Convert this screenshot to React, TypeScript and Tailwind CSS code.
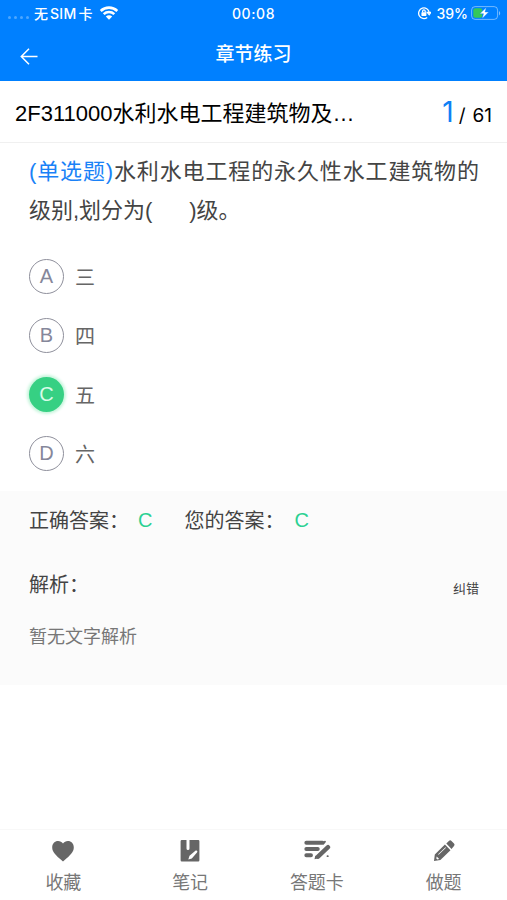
import React, { useState } from "react";
import clsx from "clsx";

interface Option {
  key: string;
  label: string;
}

const options: Option[] = [
  { key: "A", label: "三" },
  { key: "B", label: "四" },
  { key: "C", label: "五" },
  { key: "D", label: "六" },
];

const correctAnswer = "C";

const HeartIcon = () => (
  <svg width="24" height="24" viewBox="0 0 24 24" fill="currentColor">
    <path d="M12 22.6 10.6 21.2C5 16.3 1.2 13 1.2 8.4 1.2 4.7 3.8 2 7.1 2c2 0 3.8.9 4.9 2.5C13.100 2.900 14.900 2 16.900 2c3.300 0 5.900 2.700 5.900 6.400 0 4.600-3.800 7.900-9.400 12.800z" />
  </svg>
);

const NoteIcon = () => (
  <svg width="24" height="24" viewBox="0 0 24 24" fill="currentColor">
    <path
      fillRule="evenodd"
      d="M3.800 1H8.500V9.500a1.500 1.500 0 0 0 3 0V1H20.200a1.200 1.200 0 0 1 1.200 1.200V21.300a1.200 1.200 0 0 1-1.200 1.200H3.800a1.200 1.200 0 0 1-1.200-1.200V2.200A1.200 1.200 0 0 1 3.800 1zM10.300 20.400l3.500-1 5-5.600c1.400-1.700-.1-3.200-1.700-1.900l-5.600 4.900z"
    />
  </svg>
);

const SheetIcon = () => (
  <svg
    width="28"
    height="24"
    viewBox="0 0 28 24"
    fill="none"
    stroke="currentColor"
    strokeLinecap="round"
  >
    <path strokeWidth="3.900" d="M3.300 3.700H19.500M3.300 10H14.800M3.300 16.300H8" />
    <path strokeWidth="4.400" d="M15 17.700 25 8.200" />
    <path strokeWidth="1.800" d="M20.500 4.500 22 2.700M24.500 17.200h.3" />
    <path fill="currentColor" stroke="none" d="m12.300 16.500-.8 3.800 4.400-1z" />
  </svg>
);

const PencilIcon = () => (
  <svg width="24" height="24" viewBox="0 0 24 24" fill="currentColor">
    <path
      fillRule="evenodd"
      d="M12.900 5.500 18.500 11.300 8.400 21 2 22 2.800 15.400zM4.700 17.500l-.4 2.100 1 .8 1.900-.4zM13.500 8.300 6.100 15.300l.5.500 7.400-7z"
    />
    <path d="m14.300 4.400 2.600-2.500a1.800 1.800 0 0 1 2.600 0l2.500 2.700a1.800 1.800 0 0 1 0 2.500L19.500 9.900z" />
  </svg>
);

const tabs = [
  { label: "收藏", Icon: HeartIcon },
  { label: "笔记", Icon: NoteIcon },
  { label: "答题卡", Icon: SheetIcon },
  { label: "做题", Icon: PencilIcon },
];

const StatusBar = () => (
  <div className="grid h-[26px] grid-cols-3 items-center font-['Inter','Noto_Sans_CJK_SC',sans-serif] text-[14px] font-medium">
    <div className="flex items-center pl-2">
      <div className="mt-2 flex gap-[3px]">
        {[0, 1, 2, 3].map((dot) => (
          <span key={dot} className="size-[3px] rounded-full bg-white/30" />
        ))}
      </div>
      <div className="ml-[5px] flex gap-[2px] whitespace-nowrap">
        <span>无</span>
        <span className="tracking-[0.3px]">SIM</span>
        <span>卡</span>
      </div>
      <svg
        className="ml-[6px]"
        width="20"
        height="14"
        viewBox="0 0 20 14"
        fill="none"
        stroke="currentColor"
        strokeWidth="2.6"
      >
        <path d="M1.700 5C6.400.5 13.600.5 18.300 5M4.700 8.100c3-2.800 7.600-2.800 10.600 0" />
        <path
          fill="currentColor"
          stroke="none"
          d="M10 13.700 6.800 10.500c1.800-1.700 4.600-1.700 6.400 0z"
        />
      </svg>
    </div>
    <span className="text-center tracking-[0.6px]">00:08</span>
    <div className="flex items-center justify-end pr-[6px]">
      <svg
        width="14"
        height="14"
        viewBox="0 0 14 14"
        fill="none"
        stroke="currentColor"
        strokeWidth="1.300"
      >
        <path d="M10.200 11.400A5.300 5.300 0 1 1 12.200 6.500M10.300 6.300h3.600L12.200 8.700z" />
        <path d="M5.600 6.500V5.200a1.300 1.300 0 0 1 2.600 0v1.300" />
        <rect
          x="4.400"
          y="6.200"
          width="5"
          height="3.700"
          rx=".6"
          fill="currentColor"
          stroke="none"
        />
      </svg>
      <span className="ml-[6px]">39%</span>
      <svg
        className="ml-[3px]"
        width="30"
        height="14"
        viewBox="0 0 30 14"
        fill="none"
      >
        <rect
          x=".6"
          y=".6"
          width="26"
          height="12.800"
          rx="3.500"
          stroke="#fff"
          strokeOpacity=".45"
        />
        <path d="M28 5v4.500c1.600-.7 1.600-3.800 0-4.500z" fill="#fff" fillOpacity=".5" />
        <rect x="2.300" y="2.300" width="9" height="9.400" rx="2" fill="#34c759" />
        <path
          d="M15.300 1.500 8.800 7.700h3.700l-1.300 4.800 6.500-6.500H14z"
          fill="#fff"
          stroke="#0580ff"
          strokeWidth=".4"
        />
      </svg>
    </div>
  </div>
);

export default function App() {
  const [selected, setSelected] = useState("C");

  return (
    <div
      lang="zh-CN"
      className="flex h-[900px] w-[507px] flex-col overflow-hidden bg-white font-['Liberation_Sans','Noto_Sans_CJK_SC',sans-serif] text-[#444]"
    >
      <header className="h-[81px] shrink-0 bg-[#0080ff] text-white">
        <StatusBar />
        <div className="grid h-[55px] grid-cols-3 items-center">
          <button className="pl-5 pt-[5px]" aria-label="返回">
            <svg
              width="18"
              height="17"
              viewBox="0 0 18 17"
              fill="none"
              stroke="currentColor"
              strokeWidth="1.500"
            >
              <path d="M17.500 8.500H1.500M9 .8 1.300 8.500 9 16.200" />
            </svg>
          </button>
          <h1 className="pt-1 text-center text-[19px] font-medium">
            章节练习
          </h1>
        </div>
      </header>

      <div className="flex h-[62px] shrink-0 items-center justify-between border-b border-[#f0f0f0] pl-[15px] pr-[15px] pt-1 text-black">
        <h2 className="whitespace-nowrap text-[22px]">
          2F311000水利水电工程建筑物及…
        </h2>
        <div className="flex items-baseline font-['Inter',sans-serif] text-[19px] leading-[40px]">
          <span className="mr-[5px] text-[28px] text-[#0f80f5]">1</span>
          <span className="mr-[7px]">/</span>
          <span>61</span>
        </div>
      </div>

      <p className="mt-[9px] pl-[29px] pr-[28px] text-justify text-[22px] leading-[39px]">
        <span className="text-[#1a82f7]">(单选题)</span>
        水利水电工程的永久性水工建筑物的级别,划分为(
        {"\u00a0".repeat(6)})级。
      </p>

      <ul className="mt-[17px] pl-[29px]">
        {options.map(({ key, label }) => (
          <li key={key} className="flex h-[59px] items-center">
            <button
              onClick={() => setSelected(key)}
              className={clsx(
                "flex size-[35px] items-center justify-center rounded-full pb-[2px] text-[20px]",
                selected === key
                  ? "bg-[#36d083] text-[#d9fbe8] shadow-[0_0_3px_2px_#c5f5db]"
                  : "border border-[#8f909c] text-[#85879a]"
              )}
            >
              {key}
            </button>
            <span className="ml-[11px] pt-[2px] text-[20px] text-[#666]">
              {label}
            </span>
          </li>
        ))}
      </ul>

      <section className="mt-[8px] h-[194px] bg-[#fbfbfb] pl-[29px] pr-[28px] pt-[15px]">
        <div className="flex h-[30px] items-center text-[20px]">
          <span>正确答案：</span>
          <span className="ml-[9px] pb-[2px] text-[#2cd193]">
            {correctAnswer}
          </span>
          <span className="ml-[32px]">您的答案：</span>
          <span className="ml-[10px] pb-[2px] text-[#2cd193]">{selected}</span>
        </div>
        <div className="mt-[34px] flex h-[30px] items-center justify-between">
          <h3 className="text-[20px]">解析：</h3>
          <button className="mt-2 text-[13px]">纠错</button>
        </div>
        <p className="mt-[23px] text-[18px] leading-[28px] text-[#777]">
          暂无文字解析
        </p>
      </section>

      <nav className="mt-auto grid h-[71px] shrink-0 grid-cols-4 border-t border-[#f8f8f8] text-[#666]">
        {tabs.map(({ label, Icon }) => (
          <button key={label} className="flex flex-col items-center pt-[9px]">
            <Icon />
            <span className="mt-[6px] text-[18px] leading-[28px] text-[#777]">
              {label}
            </span>
          </button>
        ))}
      </nav>
    </div>
  );
}
